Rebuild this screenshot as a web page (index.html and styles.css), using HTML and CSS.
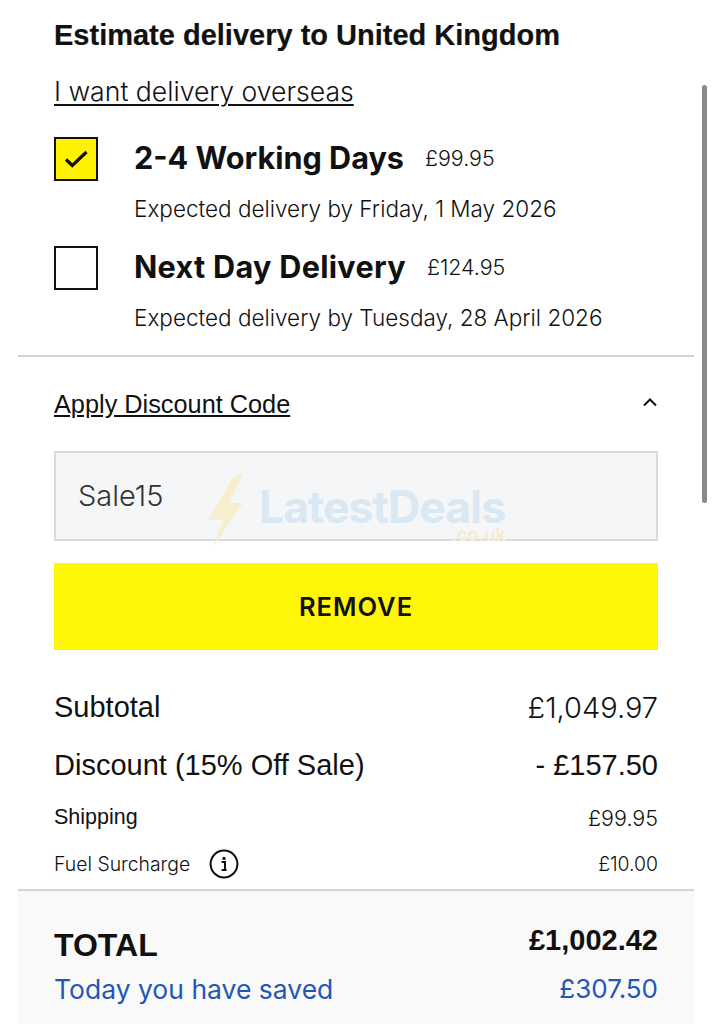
FILE: index.html
```html
<!DOCTYPE html>
<html lang="en">
<head>
    <meta charset="UTF-8">
    <meta name="viewport" content="width=device-width, initial-scale=1.0">
    <title>Basket summary</title>
    <link rel="stylesheet" href="styles.css">
</head>
<body>
    <div class="panel">
        <section class="delivery">
            <h2 class="delivery-title">Estimate delivery to United Kingdom</h2>
            <a class="overseas-link" href="#">I want delivery overseas</a>

            <div class="option">
                <span class="checkbox checked">
                    <svg width="24" height="20" viewBox="0 0 24 20"><path d="M2 10.5 L8.3 16.5 L22.5 3" fill="none" stroke="#111" stroke-width="3.2"/></svg>
                </span>
                <div class="option-head">
                    <span class="option-name">2-4 Working Days</span>
                    <span class="option-price">£99.95</span>
                </div>
                <div class="option-date">Expected delivery by Friday, 1 May 2026</div>
            </div>

            <div class="option">
                <span class="checkbox"></span>
                <div class="option-head">
                    <span class="option-name option-name-wide">Next Day Delivery</span>
                    <span class="option-price">£124.95</span>
                </div>
                <div class="option-date">Expected delivery by Tuesday, 28 April 2026</div>
            </div>
        </section>

        <section class="discount">
            <div class="discount-head">
                <a class="discount-link" href="#">Apply Discount Code</a>
                <svg class="chevron" width="16" height="10" viewBox="0 0 16 10"><path d="M2 8.5 L8 2.5 L14 8.5" fill="none" stroke="#111" stroke-width="2"/></svg>
            </div>
            <div class="code-input">Sale15</div>
            <button class="remove-btn">REMOVE</button>
        </section>

        <section class="costs">
            <div class="row row-large"><span>Subtotal</span><span class="mont">£1,049.97</span></div>
            <div class="row row-large row-discount"><span>Discount (15% Off Sale)</span><span>- £157.50</span></div>
            <div class="row row-shipping"><span>Shipping</span><span class="mont">£99.95</span></div>
            <div class="row row-fuel">
                <span class="fuel-label">Fuel Surcharge
                    <svg class="info" width="30" height="30" viewBox="0 0 30 30"><circle cx="15" cy="15" r="13.4" fill="none" stroke="#111" stroke-width="2"/><circle cx="15" cy="9.4" r="1.7" fill="#111"/><path d="M12.6 13 H16 V20 M12.6 21 H17.6" fill="none" stroke="#111" stroke-width="2"/></svg>
                </span>
                <span>£10.00</span>
            </div>
        </section>

        <section class="totals">
            <div class="row row-total"><span class="total-label">TOTAL</span><span class="total-value">£1,002.42</span></div>
            <div class="row row-saved"><span>Today you have saved</span><span class="saved-value">£307.50</span></div>
        </section>
    </div>

    <!-- overlays -->
    <div class="scroll-thumb"></div>
    <div class="watermark">
        <svg class="bolt" width="42" height="76" viewBox="0 0 42 76"><path d="M38 0 L29 3 L3 47 L18 47 L8 74 L38 30 L25 30 Z" fill="#f7edcf"/></svg>
        <span class="wm-text">LatestDeals</span>
        <span class="wm-tld">.co.uk</span>
    </div>
</body>
</html>
```

FILE: styles.css
```css
html, body {
    margin: 0;
    padding: 0;
    background: #fff;
}
body {
    position: relative;
    height: 1024px;
    overflow: hidden;
    font-family: "Liberation Sans", Arial, sans-serif;
    color: #111;
}
.panel {
    margin: 0 18px;
}
.delivery {
    padding: 19px 36px 24px;
    border-bottom: 2px solid #d4d4d4;
}
.delivery-title {
    margin: 0;
    font-size: 29px;
    line-height: 32px;
    font-weight: 700;
    -webkit-text-stroke: 0.2px #111;
}
.overseas-link {
    display: inline-block;
    margin-top: 25px;
    margin-bottom: 7px;
    font-family: "Inter", sans-serif;
    font-size: 26.6px;
    line-height: 30px;
    font-weight: 300;
    color: #111;
    text-decoration: underline;
    text-underline-offset: 3px;
    text-decoration-thickness: 1.5px;
}
.option {
    position: relative;
    padding-left: 80px;
    margin-top: 29px;
}
.checkbox {
    position: absolute;
    left: 0;
    top: -5px;
    width: 40px;
    height: 40px;
    border: 2px solid #111;
    display: flex;
    align-items: center;
    justify-content: center;
}
.checked {
    background: #fff200;
}
.option-head {
    display: flex;
    align-items: center;
    gap: 21px;
    height: 32px;
}
.option-name {
    padding-bottom: 2px;
    font-family: "Inter", sans-serif;
    font-size: 30.6px;
    font-weight: 700;
}
.option-name-wide {
    letter-spacing: 0.3px;
}
.option-price {
    font-family: "Inter", sans-serif;
    font-size: 21.4px;
    font-weight: 300;
}
.option-date {
    margin-top: 22px;
    font-family: "Inter", sans-serif;
    font-size: 22.5px;
    line-height: 26px;
    font-weight: 300;
}
.discount {
    padding: 29px 36px 0;
}
.discount-head {
    display: flex;
    justify-content: space-between;
    align-items: center;
    height: 36px;
}
.discount-link {
    font-size: 25.3px;
    color: #111;
    text-decoration: underline;
}
.chevron {
    margin-top: -4px;
}
.code-input {
    margin-top: 29px;
    height: 86px;
    line-height: 86px;
    padding-left: 22px;
    background: #f4f6f8;
    border: 2px solid #d8dade;
    font-family: "Inter", sans-serif;
    font-size: 29px;
    font-weight: 300;
    color: #333;
}
.remove-btn {
    display: block;
    width: 100%;
    height: 87px;
    margin-top: 22px;
    border: none;
    background: #fff507;
    color: #111;
    font-family: "Inter", sans-serif;
    font-size: 25.5px;
    font-weight: 600;
    letter-spacing: 1px;
}
.costs {
    padding: 0 36px;
    border-bottom: 2px solid #d4d4d4;
}
.row {
    display: flex;
    justify-content: space-between;
    align-items: center;
}
.mont {
    font-family: "Inter", sans-serif;
    font-weight: 300;
}
.row-large {
    font-size: 29px;
    height: 58px;
}
.costs .row-large:first-child {
    margin-top: 28px;
}
.row-shipping {
    font-size: 21.5px;
    height: 47px;
}
.row-fuel {
    font-family: "Inter", sans-serif;
    font-weight: 300;
    font-size: 19.4px;
    height: 46px;
    margin-bottom: 2px;
}
.fuel-label {
    display: flex;
    align-items: center;
    gap: 19px;
}
.totals {
    background: #f9f9f9;
    height: 140px;
    padding: 0 36px;
}
.row-total {
    align-items: flex-start;
    padding-top: 35px;
}
.total-label {
    font-size: 32px;
    line-height: 38px;
    font-weight: 700;
}
.total-value {
    margin-top: -1px;
    font-size: 29px;
    line-height: 30px;
    font-weight: 700;
}
.row-saved {
    margin-top: 10px;
    font-family: "Inter", sans-serif;
    font-size: 26.5px;
    line-height: 30px;
    font-weight: 400;
    color: #2257b5;
}
.saved-value {
    font-size: 26px;
}
.scroll-thumb {
    position: absolute;
    left: 702px;
    top: 85px;
    width: 5px;
    height: 418px;
    border-radius: 3px;
    background: #8a8a8a;
}
.watermark {
    position: absolute;
    left: 205px;
    top: 473px;
    width: 310px;
    height: 76px;
    pointer-events: none;
}
.bolt {
    position: absolute;
    left: 0;
    top: 0;
}
.wm-text {
    position: absolute;
    left: 54px;
    top: 15px;
    font-family: "Inter", sans-serif;
    font-size: 44.6px;
    line-height: 38px;
    font-weight: 700;
    letter-spacing: -1px;
    color: #d9e8f3;
}
.wm-tld {
    position: absolute;
    right: 9px;
    top: 53px;
    font-family: "Inter", sans-serif;
    font-size: 18px;
    line-height: 18px;
    font-weight: 700;
    color: #f5ecd0;
}
```
